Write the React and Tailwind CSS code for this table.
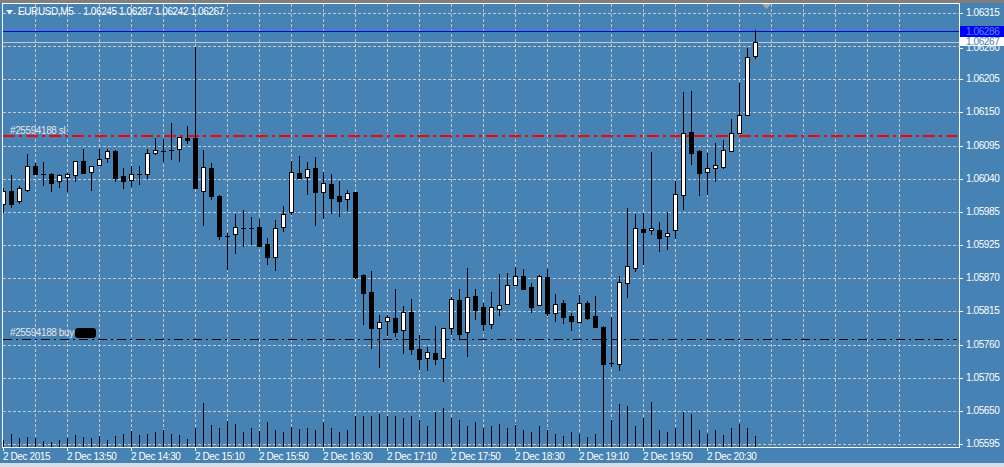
import React from "react";

// candles: [type, wickTop, bodyTop, bodyBottom, wickBottom] in chart pixels
// w = bull (hollow), b = bear (filled), d = doji
const CANDLES = [
    ["w", 188, 191, 204, 212], ["b", 175, 191, 204, 207], ["w", 186, 188, 201, 203], ["w", 154, 166, 190, 191],
    ["b", 163, 166, 174, 174], ["d", 162, 174, 174, 185], ["b", 173, 174, 183, 191], ["w", 174, 175, 181, 187],
    ["w", 173, 174, 177, 191], ["w", 161, 161, 175, 181], ["b", 149, 161, 173, 173], ["w", 166, 166, 172, 190],
    ["w", 149, 159, 165, 165], ["w", 149, 151, 158, 162], ["b", 150, 151, 178, 181], ["b", 168, 176, 181, 188],
    ["w", 166, 174, 180, 186], ["d", 166, 174, 174, 184], ["w", 149, 153, 174, 178], ["w", 138, 150, 153, 154],
    ["d", 139, 151, 151, 161], ["d", 123, 150, 150, 159], ["w", 137, 137, 149, 161], ["b", 126, 138, 140, 143],
    ["b", 47, 138, 188, 188], ["w", 150, 167, 191, 225], ["b", 163, 168, 196, 199], ["b", 195, 196, 236, 239],
    ["d", 233, 236, 236, 269], ["w", 214, 227, 234, 253], ["d", 210, 228, 228, 246], ["d", 217, 228, 228, 244],
    ["b", 219, 227, 246, 246], ["b", 238, 244, 257, 264], ["w", 220, 228, 257, 270], ["w", 206, 214, 227, 231],
    ["w", 161, 172, 212, 214], ["b", 156, 173, 178, 178], ["w", 162, 169, 177, 194], ["b", 157, 168, 192, 225],
    ["w", 172, 183, 192, 218], ["b", 174, 184, 198, 213], ["b", 181, 196, 201, 216], ["w", 190, 193, 199, 210],
    ["b", 192, 192, 277, 278], ["b", 274, 275, 293, 324], ["b", 271, 292, 328, 348], ["w", 315, 322, 328, 367],
    ["w", 315, 317, 321, 335], ["b", 289, 318, 332, 336], ["w", 306, 312, 330, 353], ["b", 299, 312, 349, 354],
    ["b", 335, 349, 359, 369], ["w", 347, 352, 358, 370], ["b", 326, 353, 359, 364], ["w", 328, 328, 358, 381],
    ["w", 297, 299, 328, 334], ["b", 289, 300, 334, 338], ["w", 268, 297, 332, 356], ["b", 289, 296, 310, 319],
    ["b", 303, 307, 324, 330], ["w", 292, 307, 324, 328], ["w", 274, 305, 309, 315], ["w", 273, 285, 304, 304],
    ["w", 267, 276, 285, 285], ["b", 269, 276, 289, 289], ["b", 283, 287, 307, 312], ["w", 275, 276, 305, 305],
    ["b", 269, 277, 313, 315], ["w", 294, 304, 313, 321], ["b", 300, 303, 317, 323], ["b", 313, 316, 321, 330],
    ["w", 295, 303, 322, 322], ["b", 301, 303, 318, 319], ["b", 296, 316, 327, 327], ["b", 326, 327, 364, 380],
    ["d", 317, 363, 363, 366], ["w", 276, 282, 364, 370], ["w", 208, 266, 283, 297], ["w", 214, 228, 268, 271],
    ["b", 213, 229, 232, 264], ["w", 152, 228, 230, 234], ["b", 222, 230, 238, 251], ["w", 212, 233, 236, 249],
    ["w", 181, 194, 230, 238], ["w", 92, 133, 195, 209], ["b", 91, 132, 153, 164], ["b", 150, 151, 173, 195],
    ["w", 153, 168, 172, 194], ["w", 143, 165, 168, 181], ["w", 140, 150, 167, 168], ["w", 119, 133, 151, 151],
    ["w", 83, 115, 133, 133], ["w", 48, 57, 115, 115], ["w", 30, 42, 56, 58],
];

// top of each volume bar
const VOLUMES = [
    440, 434, 438, 437, 438, 441, 442, 440, 438, 435, 437, 438, 436, 440, 436, 434,
    431, 435, 434, 432, 430, 434, 435, 439, 428, 403, 425, 428, 421, 424, 432, 428,
    431, 422, 430, 432, 427, 429, 428, 430, 422, 428, 432, 430, 416, 416, 416, 414,
    416, 416, 418, 416, 420, 426, 412, 408, 418, 420, 426, 422, 428, 426, 424, 428,
    425, 430, 432, 426, 430, 434, 436, 432, 434, 437, 434, 380, 420, 404, 406, 426,
    418, 402, 430, 432, 428, 412, 414, 430, 434, 430, 435, 428, 424, 428, 436,
];

const PRICES = [
    "1.06315", "1.06260", "1.06205", "1.06150", "1.06095", "1.06040", "1.05985",
    "1.05925", "1.05870", "1.05815", "1.05760", "1.05705", "1.05650", "1.05595",
];

const TIMES = [
    "2 Dec 2015", "2 Dec 13:50", "2 Dec 14:30", "2 Dec 15:10", "2 Dec 15:50", "2 Dec 16:30",
    "2 Dec 17:10", "2 Dec 17:50", "2 Dec 18:30", "2 Dec 19:10", "2 Dec 19:50", "2 Dec 20:30",
];

const gridY = (i) => Math.round(13 + 33.15 * i);

const Candle = ({ c, k }) => {
    const [type, wt, bt, bb, wb] = c;
    const cx = 3 + 8 * k;
    const flat = type === "d" || bb - bt < 1;
    return (
        <g>
            <line x1={cx + 0.5} x2={cx + 0.5} y1={wt} y2={wb + 1} stroke="#000" />
            {flat ? (
                <line x1={cx - 2} x2={cx + 3} y1={bt + 0.5} y2={bt + 0.5} stroke="#000" />
            ) : type === "b" ? (
                <rect x={cx - 2} y={bt} width={5} height={bb - bt + 1} fill="#000" />
            ) : (
                <rect x={cx - 1.5} y={bt + 0.5} width={4} height={bb - bt} fill="#fff" stroke="#000" />
            )}
        </g>
    );
};

const Chart = () => (
    <svg width="956" height="443" viewBox="3 4 956 443" shapeRendering="crispEdges" className="block">
        {/* grid */}
        {PRICES.map((p, i) => (
            <line key={p} x1={3} x2={959} y1={gridY(i) + 0.5} y2={gridY(i) + 0.5} stroke="#c3c8cc" strokeDasharray="3 2" />
        ))}
        {Array.from({ length: 28 }, (_, j) => 35 + 32 * j).map((x) => (
            <line key={x} x1={x + 0.5} x2={x + 0.5} y1={4} y2={445} stroke="#c3c8cc" strokeDasharray="3 2" />
        ))}

        {/* chart shift marker */}
        <polygon points="762,4 771,4 766.5,9" fill="#a9a9a9" shapeRendering="auto" />

        {/* bid / ask */}
        <line x1={3} x2={959} y1={31.5} y2={31.5} stroke="#0000e6" />
        <line x1={3} x2={959} y1={42.5} y2={42.5} stroke="#c8c8c8" />

        {/* order levels */}
        <line x1={3} x2={957} y1={136} y2={136} stroke="#ff0000" strokeWidth={2} strokeDasharray="12 4 3 4" />
        <line x1={3} x2={957} y1={339.5} y2={339.5} stroke="#000" strokeDasharray="9 4 2 4" />

        {/* volumes */}
        {VOLUMES.map((v, k) => (
            <line key={k} x1={3.5 + 8 * k} x2={3.5 + 8 * k} y1={v} y2={447} stroke="#000" />
        ))}

        {/* candles */}
        {CANDLES.map((c, k) => (
            <Candle key={k} c={c} k={k} />
        ))}
    </svg>
);

export default function App() {
    return (
        <div className="w-[1004px] h-[467px] overflow-hidden bg-[#4682b4] flex flex-col font-['Liberation_Sans',Arial,sans-serif] text-[10px] tracking-[-0.4px] text-white">
            <div className="h-[3px] shrink-0 bg-[#808080]" />

            <div className="flex shrink-0">
                {/* Chart window */}
                <div className="relative ml-[2px] w-[958px] h-[445px] border border-white">
                    <Chart />

                    {/* Header */}
                    <div className="absolute left-[3px] top-[2px] flex items-center leading-[12px] whitespace-nowrap">
                        <svg width="7" height="4" viewBox="0 0 7 4" className="mr-[5px]">
                            <polygon points="0,0 7,0 3.5,4" fill="#fff" />
                        </svg>
                        <span>EURUSD,M5</span>
                        <span className="ml-[10px]">1.06245 1.06287 1.06242 1.06267</span>
                    </div>

                    {/* Order labels */}
                    <div className="absolute left-[7px] top-[121px] leading-[12px] text-[#e6e6e6] whitespace-nowrap">
                        #25594188 sl
                    </div>
                    <div className="absolute left-[7px] top-[323px] flex items-center leading-[12px] text-[#e6e6e6] whitespace-nowrap">
                        <span>#25594188 buy</span>
                        <span className="ml-[1px] w-[21px] h-[10px] rounded-[3px] bg-black" />
                    </div>
                </div>

                {/* Price scale */}
                <div className="relative flex-1 h-[445px]">
                    {PRICES.map((p, i) => (
                        <div key={p} className="absolute left-0 flex items-center h-[12px]" style={{ top: gridY(i) - 3 - 6 + (i === 1 ? 2 : 0) }}>
                            <span className="w-[3px] h-px bg-white" />
                            <span className="ml-[3px] leading-[12px]">{p}</span>
                        </div>
                    ))}
                    <div className="absolute left-0 right-0 top-[23px] h-[11px] bg-[#0000ff] text-[#5a8ee0] leading-[11px] pl-[6px]">
                        1.06286
                    </div>
                    <div className="absolute left-0 right-0 top-[34px] h-[9px] bg-white text-[#4682b4] leading-[9px] pl-[6px]">
                        1.06267
                    </div>
                </div>
            </div>

            {/* Time scale */}
            <div className="flex shrink-0 h-[15px] pl-[3px]">
                {TIMES.map((t) => (
                    <div key={t} className="w-[64px] shrink-0 flex flex-col">
                        <span className="w-px h-[3px] bg-white" />
                        <span className="leading-[11px] whitespace-nowrap">{t}</span>
                    </div>
                ))}
            </div>

            <div className="flex-1 bg-[#d6dde5]" />
        </div>
    );
}
